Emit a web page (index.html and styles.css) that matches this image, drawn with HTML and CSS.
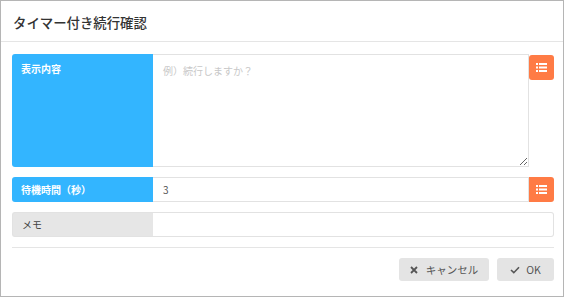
FILE: index.html
```html
<!DOCTYPE html>
<html lang="ja">
<head>
    <meta charset="UTF-8">
    <title>タイマー付き続行確認</title>
    <link rel="stylesheet" href="styles.css">
</head>
<body>
    <div class="dialog">
        <div class="dialog-header">
            <h1>タイマー付き続行確認</h1>
        </div>
        <div class="dialog-body">
            <div class="field field-tall">
                <div class="label label-blue">表示内容</div>
                <textarea class="input" placeholder="例）続行しますか？"></textarea>
                <button class="menu-btn" type="button">
                    <svg width="11" height="9" viewBox="0 0 11 9">
                        <rect x="0" y="0" width="2" height="2" fill="#fff"/>
                        <rect x="3" y="0" width="8" height="2" fill="#fff"/>
                        <rect x="0" y="3.5" width="2" height="2" fill="#fff"/>
                        <rect x="3" y="3.5" width="8" height="2" fill="#fff"/>
                        <rect x="0" y="7" width="2" height="2" fill="#fff"/>
                        <rect x="3" y="7" width="8" height="2" fill="#fff"/>
                    </svg>
                </button>
            </div>
            <div class="field">
                <div class="label label-blue">待機時間（秒）</div>
                <input class="input" type="text" value="3">
                <button class="menu-btn" type="button">
                    <svg width="11" height="9" viewBox="0 0 11 9">
                        <rect x="0" y="0" width="2" height="2" fill="#fff"/>
                        <rect x="3" y="0" width="8" height="2" fill="#fff"/>
                        <rect x="0" y="3.5" width="2" height="2" fill="#fff"/>
                        <rect x="3" y="3.5" width="8" height="2" fill="#fff"/>
                        <rect x="0" y="7" width="2" height="2" fill="#fff"/>
                        <rect x="3" y="7" width="8" height="2" fill="#fff"/>
                    </svg>
                </button>
            </div>
            <div class="field">
                <div class="label label-gray">メモ</div>
                <input class="input input-last" type="text">
            </div>
        </div>
        <div class="dialog-footer">
            <button class="btn" type="button">
                <svg width="8" height="8" viewBox="0 0 8 8">
                    <path d="M1 1 L7 7 M7 1 L1 7" stroke="#555" stroke-width="1.8"/>
                </svg>
                キャンセル
            </button>
            <button class="btn btn-ok" type="button">
                <svg width="10" height="8" viewBox="0 0 10 8">
                    <path d="M1 4 L3.8 6.7 L9 1.2" stroke="#555" stroke-width="1.6" fill="none"/>
                </svg>
                OK
            </button>
        </div>
    </div>
</body>
</html>
```

FILE: styles.css
```css
body {
    margin: 0;
    padding: 0;
    background: #fff;
    font-family: 'Noto Sans CJK JP', 'Noto Sans', sans-serif;
    color: #333;
}

.dialog {
    box-sizing: border-box;
    width: 564px;
    height: 297px;
    border: 1px solid #b5b5b5;
    background: #fff;
}

.dialog-header {
    height: 40px;
    border-bottom: 1px solid #e5e5e5;
    display: flex;
    align-items: center;
    padding-left: 12px;
    padding-top: 1px;
    box-sizing: border-box;
    height: 41px;
}

.dialog-header h1 {
    margin: 0;
    font-size: 13.4px;
    font-weight: 500;
    color: #333;
}

.dialog-body {
    padding: 12px 9px 0 11px;
    display: flex;
    flex-direction: column;
    gap: 10px;
}

.field {
    display: flex;
    height: 25px;
}

.field-tall {
    height: 113px;
}

.label {
    box-sizing: border-box;
    width: 141px;
    flex: none;
    padding: 0 9px;
    font-size: 10px;
    display: flex;
    align-items: center;
    border-radius: 3px 0 0 3px;
}

.field-tall .label {
    align-items: flex-start;
    padding-top: 7px;
}

.label-blue {
    background: #33b5ff;
    color: #fff;
    font-weight: bold;
}

.label-gray {
    background: #e6e6e6;
    color: #444;
    border: 1px solid #e2e2e2;
    border-right: none;
}

.input {
    box-sizing: border-box;
    flex: 1;
    min-width: 0;
    margin: 0;
    border: 1px solid #e2e2e2;
    border-left: none;
    padding: 0 10px;
    font-family: inherit;
    font-size: 10px;
    color: #555;
    outline: none;
    background: #fff;
}

textarea.input {
    padding-top: 8px;
    resize: vertical;
    height: 113px;
}

.input::placeholder {
    color: #c8c8c8;
}

.input-last {
    border-radius: 0 3px 3px 0;
}

.menu-btn {
    width: 25px;
    height: 25px;
    flex: none;
    margin: 0;
    padding: 0;
    border: none;
    border-radius: 0 3px 3px 0;
    background: #ff7b45;
    display: flex;
    align-items: center;
    justify-content: center;
    cursor: pointer;
}

.field-tall .menu-btn {
    margin-top: 1px;
    border-radius: 3px;
}

.dialog-footer {
    margin: 10px 9px 0 11px;
    border-top: 1px solid #e5e5e5;
    padding-top: 10px;
    display: flex;
    justify-content: flex-end;
    gap: 8px;
}

.btn {
    height: 23px;
    width: 90px;
    border: none;
    border-radius: 3px;
    background: #e4e4e4;
    color: #555;
    font-family: inherit;
    font-size: 10.5px;
    display: flex;
    align-items: center;
    justify-content: center;
    gap: 8px;
    padding: 0;
    cursor: pointer;
}

.btn-ok {
    width: 57px;
    gap: 6px;
}
```
